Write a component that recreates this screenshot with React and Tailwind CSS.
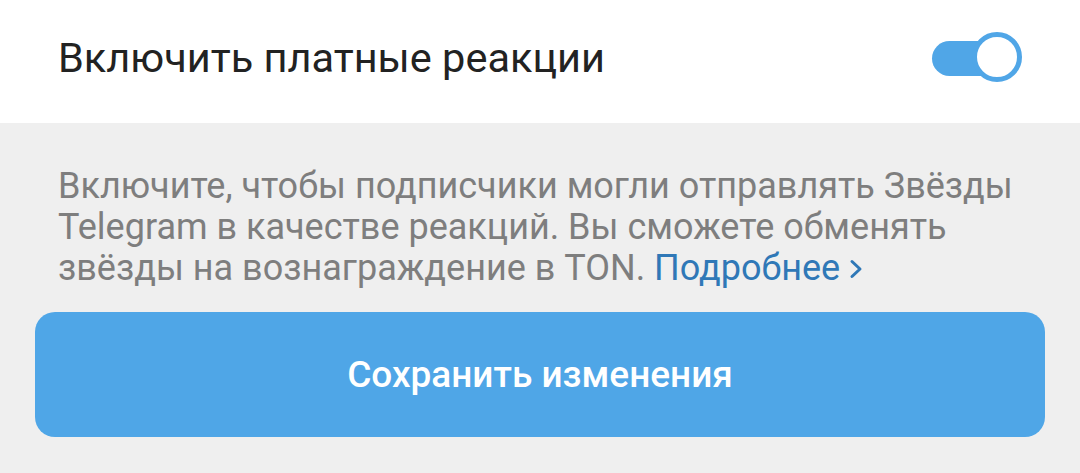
const Toggle = ({ on = true }) => {
  return (
    <div className="relative w-[90px] h-[52px] shrink-0">
      <div className="absolute left-0 top-[9px] w-[70px] h-[35px] rounded-full bg-[#50a6e7]" />
      <div className="absolute right-0 top-0 w-[50px] h-[50px] rounded-full bg-white border-[5px] border-[#50a6e7]" />
    </div>
  );
};

const Chevron = () => (
  <svg width="16" height="22" viewBox="0 0 16 22" className="inline-block ml-[8px] align-[0px]">
    <path d="M4 3.5 L12 11 L4 18.5" fill="none" stroke="currentColor" strokeWidth="3" strokeLinecap="round" strokeLinejoin="round" />
  </svg>
);

export default function App() {
  return (
    <div className="w-[1080px] h-[473px] bg-[#efefef] font-['Roboto',sans-serif] overflow-hidden">
      {/* switch row */}
      <div className="h-[123px] bg-white flex items-center justify-between pl-[58px] pr-[58px] pb-[8px]">
        <span className="text-[41.5px] text-[#222222] leading-none">Включить платные реакции</span>
        <Toggle />
      </div>

      {/* hint text */}
      <div className="pl-[58px] pr-[30px] pt-[43px]">
        <p className="text-[36px] leading-[41px] text-[#7e7e7e]">
          Включите, чтобы подписчики могли отправлять Звёзды Telegram в качестве реакций. Вы сможете обменять звёзды на вознаграждение в TON.{" "}
          <span className="text-[#2f78b7] whitespace-nowrap">
            Подробнее
            <Chevron />
          </span>
        </p>
      </div>

      <div className="px-[35px] pt-[23px]">
        <button className="w-full h-[125px] rounded-[20px] bg-[#4fa6e7] text-white text-[37px] font-medium">
          Сохранить изменения
        </button>
      </div>
    </div>
  );
}
